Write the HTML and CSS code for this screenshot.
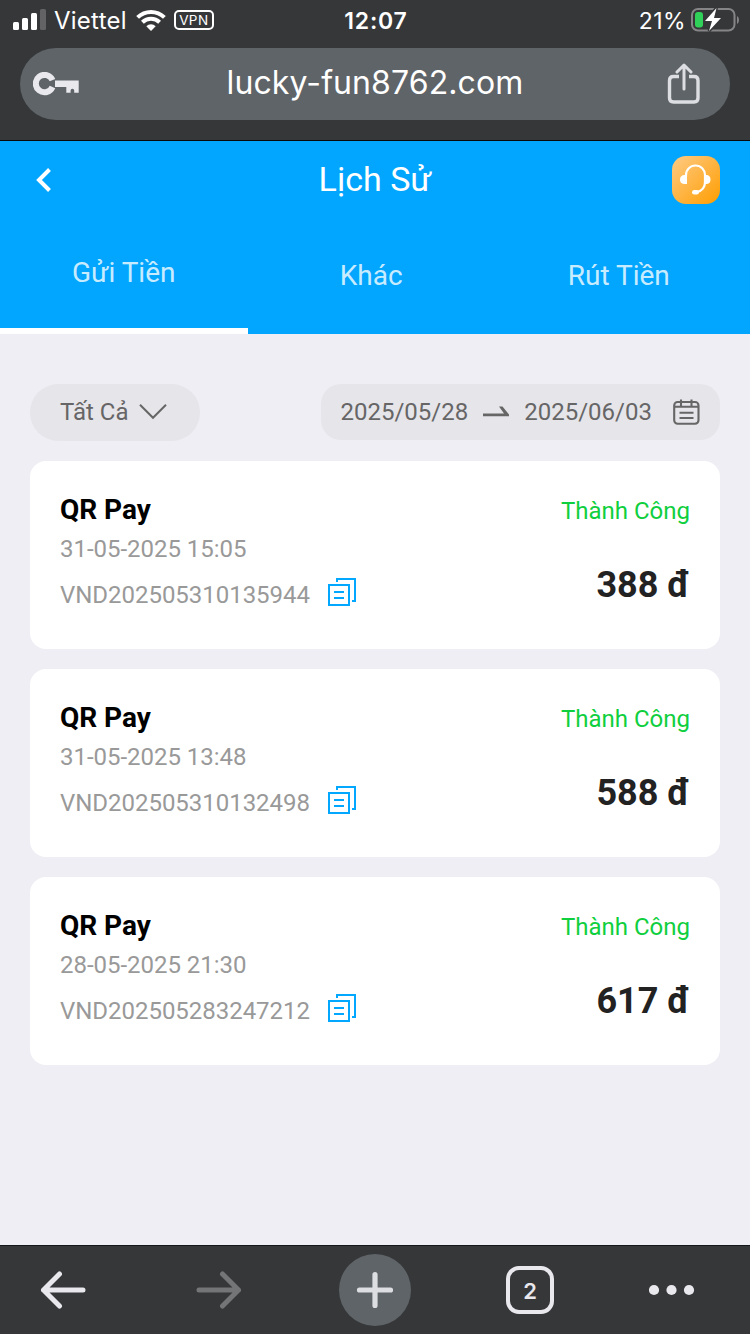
FILE: index.html
```
<!DOCTYPE html>
<html lang="vi">
<head>
<meta charset="utf-8">
<title>Lịch Sử</title>
<link rel="stylesheet" href="styles.css">
</head>
<body>
<div class="screen">
  <header class="browser">
    <div class="status">
      <div class="status-left">
        <svg width="34" height="22" viewBox="0 0 34 22"><g fill="#fff"><rect x="0" y="13" width="6" height="8" rx="1.5"/><rect x="9" y="9" width="6" height="12" rx="1.5"/><rect x="18" y="4" width="6" height="17" rx="1.5"/><rect x="27" y="0" width="6" height="21" rx="1.5" fill="#636365"/></g></svg>
        <span class="carrier">Viettel</span>
        <svg class="wifi" width="30" height="22" viewBox="0 0 30 22"><g fill="none" stroke="#fff" stroke-width="4"><path d="M1.6 8.4a19.2 19.2 0 0 1 26.8 0"/><path d="M6.4 13.3a12.3 12.3 0 0 1 17.2 0"/></g><path d="M15 22l-4.7-4.8a6.7 6.7 0 0 1 9.4 0z" fill="#fff"/></svg>
        <span class="vpn">VPN</span>
      </div>
      <div class="clock">12:07</div>
      <div class="status-right">
        <span class="percent">21%</span>
        <svg width="48" height="24" viewBox="0 0 48 24"><rect x="1" y="1" width="42.500" height="21.500" rx="6" fill="none" stroke="#858587" stroke-width="2"/><path d="M46 8c2.600 1.300 2.600 6.700 0 8z" fill="#858587"/><path d="M25.500 0L14 13h7L18 23 30 10h-7z" fill="#fff" stroke="#363739" stroke-width="3" paint-order="stroke"/><rect x="4" y="4" width="8" height="15.500" rx="3" fill="#30d158"/></svg>
      </div>
    </div>
    <div class="address">
      <svg class="key" width="47" height="24" viewBox="0 0 47 24"><path d="M19.500 8.200A8.700 8.700 0 1 0 19.500 15" fill="none" stroke="#e8e8ed" stroke-width="6"/><path d="M22 8.500h23.700v12.300h-4.500v-2.300a1.800 1.800 0 0 0-3.600 0v2.300h-4.300V15H22z" fill="#e8e8ed"/></svg>
      <span class="url">lucky-fun8762.com</span>
      <svg class="share" width="34" height="42" viewBox="0 0 34 42"><g fill="none" stroke="#dcdee2" stroke-width="3.400" stroke-linejoin="round"><path d="M12 13.500H6.500Q2.500 13.500 2.500 17.500v17.500q0 4 4 4h20.500q4 0 4-4V17.500q0-4-4-4H22"/><path d="M17 26V2.500M10 9l7-7 7 7" stroke-width="3" stroke-linecap="round"/></g></svg>
    </div>
  </header>

  <section class="hero">
    <div class="titlebar">
      <svg width="16" height="26" viewBox="0 0 16 26"><path d="M13.500 2.500L3 13l10.500 10.500" fill="none" stroke="#fff" stroke-width="4"/></svg>
      <h1>Lịch Sử</h1>
      <div class="support"><svg width="48" height="48" viewBox="0 0 48 48"><path d="M14 20.500V19a9.500 9.500 0 0 1 19 0v7q0 8-8 10" fill="none" stroke="#fff" stroke-width="2.200"/><path d="M15 19v9h-3q-4-.5-4-4.500t4-4.500zM32 19v9h3q3.500-.5 3.500-4.500T35 19z" fill="#fff"/><rect x="20" y="34" width="7" height="4.600" rx="2.300" fill="#fff"/></svg></div>
    </div>
    <nav class="tabs">
      <div class="tab active">Gửi Tiền</div>
      <div class="tab">Khác</div>
      <div class="tab">Rút Tiền</div>
    </nav>
  </section>

  <main>
    <div class="filters">
      <div class="type"><span>Tất Cả</span><svg width="28" height="18" viewBox="0 0 28 18"><path d="M1 .800l13 13 13-13" fill="none" stroke="#666" stroke-width="2"/></svg></div>
      <div class="dates">
        <span>2025/05/28</span>
        <svg class="arrow" width="26" height="12" viewBox="0 0 26 12"><path d="M0 7.500h21L16 .5h3.500L26 8.500v1.700H0z" fill="#666"/></svg>
        <span>2025/06/03</span>
        <svg class="calendar" width="27" height="28" viewBox="0 0 27 28"><g fill="none" stroke="#666" stroke-width="2.100"><rect x="1.200" y="4" width="24.300" height="21.800" rx="3.500"/><path d="M1.500 8.700h24M8 1.500v6.500M18.500 1.500v6.500M6.500 14.700h14M6.500 20h14"/></g></svg>
      </div>
    </div>

    <article class="card">
      <div class="details"><h2>QR Pay</h2><time>31-05-2025 15:05</time><div class="reference"><span>VND202505310135944</span><svg width="28" height="28" viewBox="0 0 28 28"><g fill="none" stroke="#02a7ff" stroke-width="2"><path d="M1 7h20v20H1zM9 4V1h18v22h-3M6 14h10M6 20h10"/></g></svg></div></div>
      <div class="result"><span class="state">Thành Công</span><strong>388 đ</strong></div>
    </article>
    <article class="card">
      <div class="details"><h2>QR Pay</h2><time>31-05-2025 13:48</time><div class="reference"><span>VND202505310132498</span><svg width="28" height="28" viewBox="0 0 28 28"><g fill="none" stroke="#02a7ff" stroke-width="2"><path d="M1 7h20v20H1zM9 4V1h18v22h-3M6 14h10M6 20h10"/></g></svg></div></div>
      <div class="result"><span class="state">Thành Công</span><strong>588 đ</strong></div>
    </article>
    <article class="card">
      <div class="details"><h2>QR Pay</h2><time>28-05-2025 21:30</time><div class="reference"><span>VND202505283247212</span><svg width="28" height="28" viewBox="0 0 28 28"><g fill="none" stroke="#02a7ff" stroke-width="2"><path d="M1 7h20v20H1zM9 4V1h18v22h-3M6 14h10M6 20h10"/></g></svg></div></div>
      <div class="result"><span class="state">Thành Công</span><strong>617 đ</strong></div>
    </article>
  </main>

  <footer class="toolbar">
    <svg width="46" height="38" viewBox="0 0 46 38"><path d="M43 19H3.500M19.500 3L3.500 19l16 16" fill="none" stroke="#e8e8ed" stroke-width="5" stroke-linecap="round" stroke-linejoin="round"/></svg>
    <svg class="forward" width="46" height="38" viewBox="0 0 46 38"><path d="M3 19h39.500M26.500 3l16 16-16 16" fill="none" stroke="#747577" stroke-width="5" stroke-linecap="round" stroke-linejoin="round"/></svg>
    <div class="plus"><svg width="38" height="38" viewBox="0 0 38 38"><path d="M3.500 19h31M19 3.500v31" stroke="#dcdee2" stroke-width="5.200" stroke-linecap="round"/></svg></div>
    <div class="count">2</div>
    <svg class="more" width="46" height="12" viewBox="0 0 46 12"><g fill="#e8e8ed"><circle cx="5" cy="6" r="5.100"/><circle cx="22.500" cy="6" r="5.100"/><circle cx="40" cy="6" r="5.100"/></g></svg>
  </footer>
</div>
</body>
</html>
```
FILE: styles.css
```
* { box-sizing: border-box; }
body { margin: 0; background: #efeef4; font-family: Roboto, "Noto Sans", sans-serif; }
svg { display: block; flex: none; }
.screen { width: 750px; height: 1334px; display: flex; flex-direction: column; overflow: hidden; }

.browser { height: 141px; flex: none; background: #363739; border-bottom: 1px solid #07090c; color: #fff; font-family: Inter, sans-serif; }
.status { height: 48px; display: grid; grid-template-columns: 1fr auto 1fr; padding: 0 11px 0 13px; }
.status-left { display: flex; align-items: center; height: 40px; }
.carrier { margin-left: 7px; font-size: 24px; line-height: 40px; letter-spacing: 0.25px; padding-top: 1px; }
.wifi { margin-left: 9px; }
.vpn { margin-left: 8px; width: 40px; height: 20px; border: 2px solid #fff; border-radius: 5px; font-size: 13.5px; line-height: 17px; letter-spacing: 0.4px; text-align: center; }
.clock { font-size: 23px; font-weight: 600; line-height: 42px; letter-spacing: 0.8px; }
.status-right { display: flex; align-items: center; justify-content: flex-end; gap: 5px; height: 40px; }
.percent { font-size: 23px; line-height: 40px; padding-top: 2px; letter-spacing: .4px; }
.address { height: 72px; margin: 0 20px; padding: 0 29px 0 13px; border-radius: 36px; background: #5f6468; display: grid; grid-template-columns: 47px 1fr 34px; align-items: center; }
.url { font-size: 32px; line-height: 70px; text-align: center; letter-spacing: .1px; padding-left: 3px; padding-bottom: 2px; }

.hero { height: 193px; flex: none; background: #02a6ff; color: #fff; }
.titlebar { height: 78px; padding: 0 30px 0 36px; display: grid; grid-template-columns: 48px 1fr 48px; align-items: center; }
h1 { margin: 0; padding: 0 6px 2px 0; font-size: 34px; font-weight: 400; line-height: 76px; text-align: center; }
.support { width: 48px; height: 48px; border-radius: 14px; background: linear-gradient(135deg, #ffcb85, #ff9d00); }
.tabs { display: flex; height: 115px; }
.tab { width: 247.5px; text-align: center; font-size: 28px; line-height: 114px; color: rgba(255, 255, 255, .8); }
.active { line-height: 108px; border-bottom: 6px solid #fff; }

main { flex: 1; padding: 50px 30px 0; display: flex; flex-direction: column; gap: 20px; }
.filters { height: 57px; display: flex; justify-content: space-between; align-items: flex-start; font-size: 24px; color: #666; }
.type { width: 170px; height: 57px; padding-left: 30px; border-radius: 29px; background: #e6e5ea; display: flex; align-items: center; gap: 10px; }
.type span { line-height: 55px; }
.dates { width: 399px; height: 56px; padding-left: 19.5px; border-radius: 20px; background: #e6e5ea; display: flex; align-items: center; }
.arrow { margin: 0 15px; }
.calendar { margin-left: 21px; }
.card { height: 188px; flex: none; padding: 32px 30px; border-radius: 16px; background: #fff; display: flex; justify-content: space-between; }
.details { display: flex; flex-direction: column; font-size: 24px; color: #999; letter-spacing: -.03px; }
h2 { margin: 0; font-size: 28px; font-weight: 700; line-height: 34px; color: #000; }
time { line-height: 28px; margin-top: 8px; }
.reference { display: flex; gap: 18px; height: 28px; margin-top: 15px; }
.reference span { line-height: 34px; }
.result { display: flex; flex-direction: column; align-items: flex-end; }
.state { color: #0fcf3e; font-size: 24px; line-height: 36px; }
.result strong { font-size: 36px; line-height: 44px; margin-top: 34px; color: #222; }

.toolbar { height: 89px; flex: none; border-top: 1px solid #14171a; background: #363739; display: flex; align-items: center; padding-left: 40px; }
.forward { margin-left: 110px; }
.plus { margin-left: 97px; width: 72px; height: 72px; border-radius: 50%; background: #5f6468; display: grid; place-items: center; }
.count { margin-left: 95px; width: 48px; height: 48px; border: 4px solid #e8e8ed; border-radius: 13px; color: #e8e8ed; font: 600 22px/42px Inter, sans-serif; text-align: center; padding-right: 0; }
.more { margin-left: 95px; }
```
